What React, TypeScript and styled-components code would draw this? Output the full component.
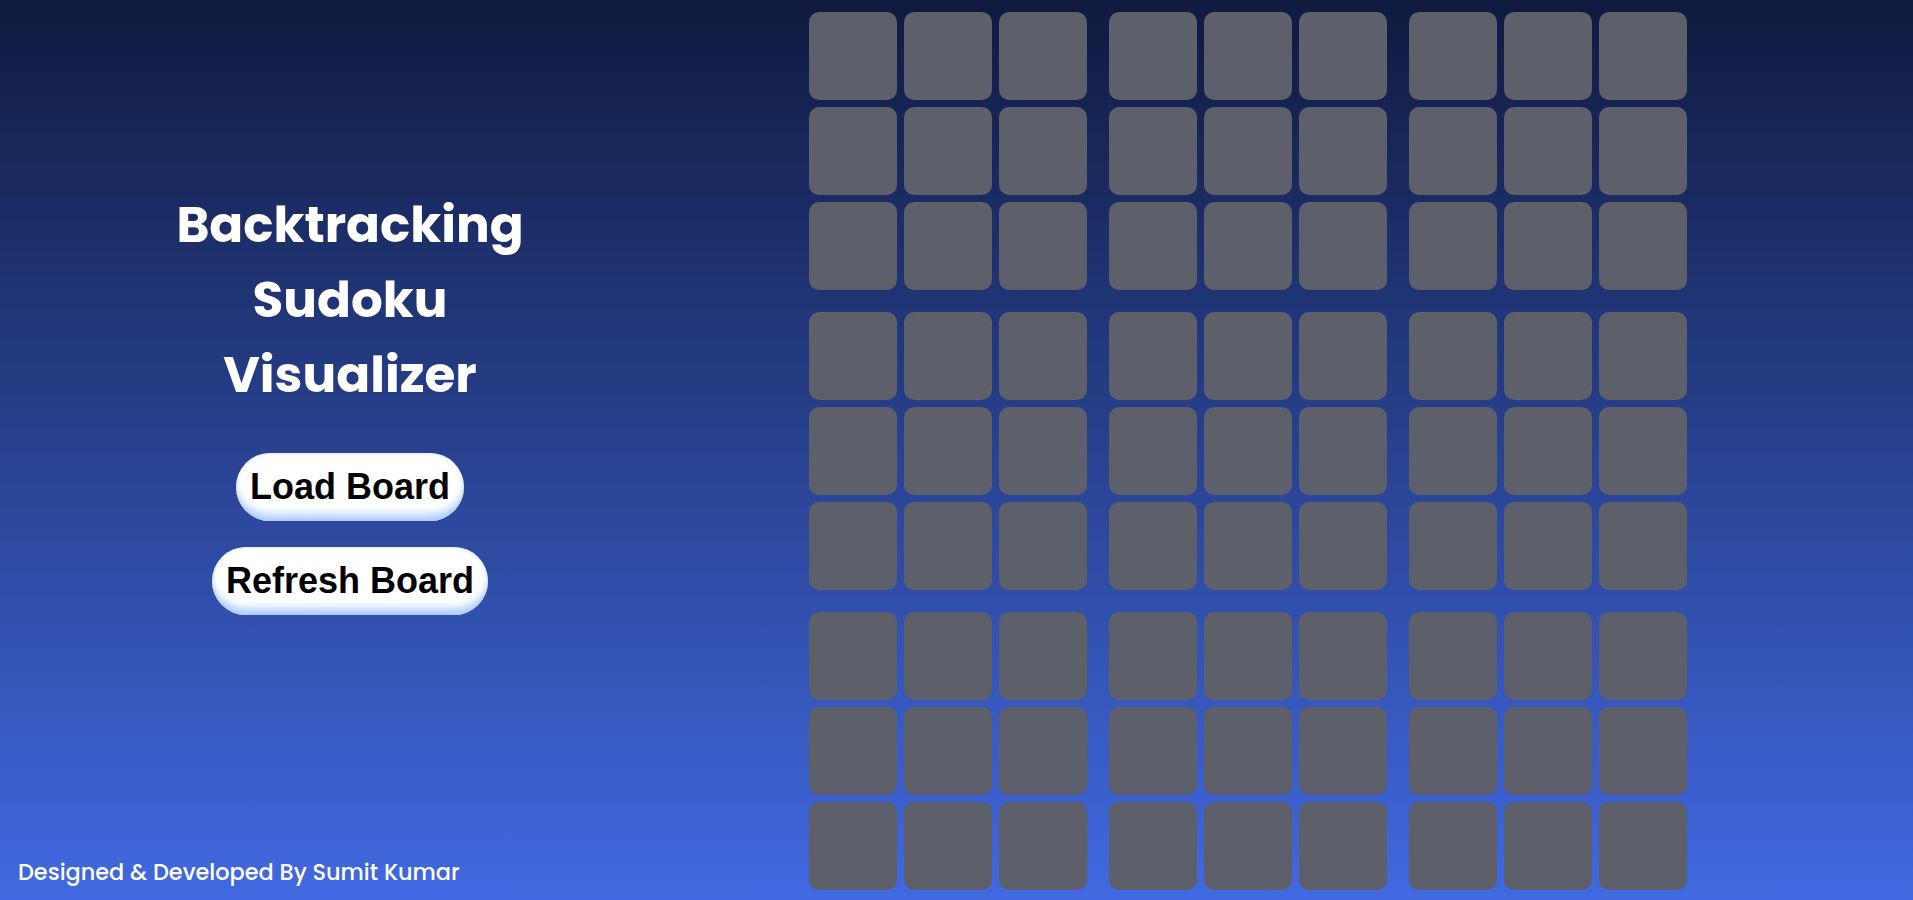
import React from 'react';
import styled, { createGlobalStyle } from 'styled-components';

const GlobalStyle = createGlobalStyle`
  html, body {
    margin: 0;
    padding: 0;
  }
  body {
    min-height: 100vh;
    background: linear-gradient(to bottom, #101a3f 0%, #4169e1 100%);
    font-family: Poppins, Inter, "Open Sans", Arial, sans-serif;
    color: #fff;
  }
`;

const Page = styled.div`
  display: flex;
  height: 100vh;
  min-height: 900px;
  box-sizing: border-box;
`;

const Sidebar = styled.aside`
  width: 700px;
  flex-shrink: 0;
  display: flex;
  flex-direction: column;
  align-items: center;
  padding-top: 187px;
  box-sizing: border-box;
`;

const Title = styled.h1`
  margin: 0 0 41px;
  font-family: Poppins, Inter, "Open Sans", sans-serif;
  font-size: 50px;
  font-weight: 700;
  line-height: 75px;
  text-align: center;
  color: #fff;

  span {
    display: block;
  }
`;

const ButtonGroup = styled.div`
  display: flex;
  flex-direction: column;
  align-items: center;
  gap: 26px;
`;

const Button = styled.button`
  font-family: "Liberation Sans", Arial, sans-serif;
  font-size: 36px;
  font-weight: 700;
  line-height: normal;
  color: #000;
  padding: 13px 14px;
  border: none;
  border-radius: 999px;
  background: #fff;
  box-shadow: inset 0 -10px 10px -4px #a6c8fb, inset 0 0 4px #d4e3fc;
  cursor: pointer;
`;

const Footer = styled.footer`
  margin-top: auto;
  align-self: flex-start;
  padding: 0 0 11px 18px;
  font-family: Poppins, Inter, "Open Sans", sans-serif;
  font-size: 22.4px;
  font-weight: 500;
  color: #fff;
`;

const Board = styled.div`
  margin-left: 109px;
  padding-top: 12px;
  display: grid;
  grid-template-columns: repeat(3, auto);
  grid-auto-rows: max-content;
  gap: 22px;
  align-content: start;
`;

const Block = styled.div`
  display: grid;
  grid-template-columns: repeat(3, 88px);
  gap: 7px;
`;

const Cell = styled.div`
  width: 88px;
  height: 88px;
  border-radius: 10px;
  background: #5d5f6b;
  display: flex;
  align-items: center;
  justify-content: center;
  font-size: 40px;
  color: #fff;
`;

const App: React.FC = () => {
  const blocks = Array.from({ length: 9 });
  const cells = Array.from({ length: 9 });

  return (
    <>
      <GlobalStyle />
      <Page>
        <Sidebar>
          <Title>
            <span>Backtracking</span>
            <span>Sudoku</span>
            <span>Visualizer</span>
          </Title>
          <ButtonGroup>
            <Button>Load Board</Button>
            <Button>Refresh Board</Button>
          </ButtonGroup>
          <Footer>Designed &amp; Developed By Sumit Kumar</Footer>
        </Sidebar>
        <Board>
          {blocks.map((_, b) => (
            <Block key={b}>
              {cells.map((__, c) => (
                <Cell key={c} />
              ))}
            </Block>
          ))}
        </Board>
      </Page>
    </>
  );
};

export default App;
